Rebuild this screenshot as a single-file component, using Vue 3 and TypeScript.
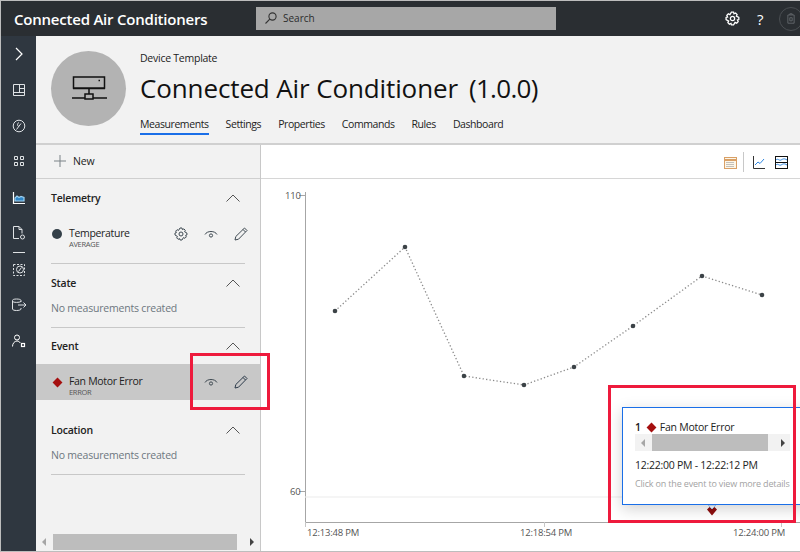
<script setup lang="ts">
const tabs = ['Measurements', 'Settings', 'Properties', 'Commands', 'Rules', 'Dashboard']

const points = [
  [335, 311], [405, 247], [464, 376], [524, 385],
  [574, 367], [633, 326], [702, 276], [762, 295]
]
const polyline = points.map(p => `${p[0] - 261},${p[1] - 144}`).join(' ')
</script>

<template>
  <div class="window">
    <header class="topbar">
      <div class="brand">Connected Air Conditioners</div>
      <div class="search">
        <svg width="14" height="14" viewBox="0 0 14 14" fill="none" stroke="#333" stroke-width="1.1">
          <circle cx="8.5" cy="5.5" r="3.6" />
          <path d="M5.8 8.2 1.5 12.5" />
        </svg>
        <span>Search</span>
      </div>
      <div class="top-icons">
        <svg width="15" height="15" viewBox="0 0 14 14" fill="none" stroke="#fff" stroke-width="1.2">
          <circle cx="7" cy="7" r="2" />
          <path d="M6 1h2l.4 1.6 1.5-.7 1.4 1.4-.7 1.5L12.9 6v2l-1.300.4.7 1.500-1.400 1.400-1.500-.7L8 13H6l-.4-1.400-1.500.7-1.400-1.400.7-1.500L1 8V6l1.400-.4-.7-1.500 1.400-1.400 1.500.7z" />
        </svg>
        <span class="help">?</span>
        <div class="avatar">
          <svg width="8" height="11" viewBox="0 0 10 14" fill="none" stroke="#6d7175">
            <path d="M1 2.500h8V13H1zM3.500 2.500V1h3v1.500M3.500 6h3v4h-3z" />
          </svg>
        </div>
      </div>
    </header>

    <div class="body">
      <nav class="rail">
        <svg width="10" height="14" viewBox="0 0 10 14" fill="none" stroke="#fff" stroke-width="1.200">
          <path d="M2 1l6 6-6 6" />
        </svg>
        <svg width="14" height="14" viewBox="0 0 14 14" fill="none" stroke="#dfe2e5">
          <path d="M1.500 1.500h11v11h-11zM1.500 9.500h11M7.500 1.500v8M7.500 5.500h5" />
        </svg>
        <svg width="14" height="14" viewBox="0 0 14 14" fill="none" stroke="#dfe2e5">
          <circle cx="7" cy="7" r="5.800" />
          <path d="M4.500 10.500 9 4.500M7 7.500c-2-.5-2-3.500 0-3.800" />
        </svg>
        <svg width="12" height="12" viewBox="0 0 12 12" fill="none" stroke="#dfe2e5">
          <path d="M1.500 1.500h3v3h-3zM7.500 1.500h3v3h-3zM1.500 7.500h3v3h-3zM7.500 7.500h3v3h-3z" />
        </svg>
        <svg class="r-telemetry" width="14" height="14" viewBox="0 0 14 14" fill="none" stroke="#9fd2f2" stroke-width="1.200">
          <path d="M1.500 1v11.500h11.500" stroke="#fff" />
          <path d="M3 10V7l2-2 2 1.500 2-1 3 1V10z" fill="#2f86c8" />
        </svg>
        <svg class="r-doc" width="14" height="16" viewBox="0 0 14 16" fill="none" stroke="#dfe2e5">
          <path d="M7 13.500H1.500v-12H7l3 3v4M7 1.500v3h3" />
          <circle cx="10.500" cy="12" r="2" />
        </svg>
        <div class="rail-sep"></div>
        <svg width="14" height="14" viewBox="0 0 14 14" fill="none" stroke="#dfe2e5">
          <path d="M1.500 1.500h11v11h-11z" stroke-dasharray="2 1.500" />
          <circle cx="8" cy="6.500" r="3.500" />
          <path d="M6.500 8.500 9.500 4.500" />
        </svg>
        <svg width="16" height="14" viewBox="0 0 16 14" fill="none" stroke="#dfe2e5">
          <path d="M10 4V2.500C10 1.500 8 1 5.500 1S1.500 1.500 1.500 2.500v8.500c0 1 2 1.500 4 1.500s4.500-.5 4.500-1.500V10M1.500 3.500c1 1.200 7 1.200 8.500 0M7 7h8M12.500 4.500 15 7l-2.500 2.500" />
        </svg>
        <svg width="14" height="14" viewBox="0 0 14 14" fill="none" stroke="#fff">
          <circle cx="5" cy="3.500" r="2.500" />
          <path d="M.5 12.500c0-3 2-5.500 4.500-5.500 1.500 0 2.500.8 3.300 2" />
          <rect x="9.500" y="9.500" width="3" height="3" stroke="#fff" stroke-width="1.200" />
        </svg>
      </nav>

      <main class="main">
        <section class="page-head">
          <div class="device-circle">
            <svg width="36" height="26" viewBox="0 0 36 26" fill="none" stroke="#111" stroke-width="1.500">
              <path d="M2.500 1h31v11h-31zM2 12.500h32" />
              <path d="M27.500 4.500h1.500" stroke-width="1.600" />
              <path d="M18 13v5M14 19.500V18h8v5h-8zM1 22h13M22 22h14" />
            </svg>
          </div>
          <div class="head-text">
            <div class="eyebrow">Device Template</div>
            <h1>Connected Air Conditioner<span class="ver">(1.0.0)</span></h1>
            <div class="tabs">
              <span v-for="(t, i) in tabs" :key="t" class="tab" :class="{ active: i === 0 }">{{ t }}</span>
            </div>
          </div>
        </section>

        <div class="content">
          <aside class="panel">
            <div class="new-row">
              <svg width="14" height="14" viewBox="0 0 14 14" stroke="#7a8287" fill="none"><path d="M7 1v12M1 7h12" /></svg>
              <span>New</span>
            </div>

            <div class="group">
              <div class="group-head">
                <b>Telemetry</b>
                <svg class="caret" width="14" height="8" viewBox="0 0 14 8" fill="none" stroke="#555"><path d="M.5 7.500 7 1l6.500 6.500" /></svg>
              </div>
              <div class="item">
                <span class="dot"></span>
                <div class="item-name">
                  <div>Temperature</div>
                  <small>AVERAGE</small>
                </div>
                <svg class="gear" width="14" height="14" viewBox="0 0 14 14" fill="none" stroke="#3f4a52">
                  <circle cx="7" cy="7" r="2" />
                  <path d="M6 1h2l.4 1.600 1.500-.7 1.400 1.400-.7 1.500L12.900 6v2l-1.300.4.7 1.500-1.400 1.400-1.500-.7L8 13H6l-.4-1.400-1.500.7-1.400-1.400.7-1.500L1 8V6l1.400-.4-.7-1.500 1.400-1.400 1.500.7z" />
                </svg>
                <svg class="eye" width="14" height="10" viewBox="0 0 14 10" fill="none" stroke="#3f4a52">
                  <path d="M1 5.500C3 1.500 11 1.500 13 5.500" />
                  <circle cx="7" cy="6.500" r="1.600" />
                </svg>
                <svg class="pen" width="14" height="14" viewBox="0 0 14 14" fill="none" stroke="#3f4a52">
                  <path d="M1 13l.8-3.500L10.500 1 13 3.500 4.500 12.200zM9 2.500 11.500 5" />
                </svg>
              </div>
            </div>

            <div class="group">
              <div class="group-head">
                <b>State</b>
                <svg class="caret" width="14" height="8" viewBox="0 0 14 8" fill="none" stroke="#555"><path d="M.5 7.500 7 1l6.500 6.500" /></svg>
              </div>
              <div class="empty">No measurements created</div>
            </div>

            <div class="group event">
              <div class="group-head tight">
                <b>Event</b>
                <svg class="caret" width="14" height="8" viewBox="0 0 14 8" fill="none" stroke="#555"><path d="M.5 7.500 7 1l6.500 6.500" /></svg>
              </div>
              <div class="item selected">
                <span class="diamond"></span>
                <div class="item-name">
                  <div>Fan Motor Error</div>
                  <small>ERROR</small>
                </div>
                <svg class="eye" width="14" height="10" viewBox="0 0 14 10" fill="none" stroke="#3f4a52">
                  <path d="M1 5.500C3 1.500 11 1.500 13 5.500" />
                  <circle cx="7" cy="6.500" r="1.600" />
                </svg>
                <svg class="pen" width="14" height="14" viewBox="0 0 14 14" fill="none" stroke="#2c3a4a">
                  <path d="M1 13l.8-3.500L10.500 1 13 3.500 4.500 12.200zM9 2.500 11.500 5" />
                </svg>
              </div>
            </div>

            <div class="group">
              <div class="group-head location">
                <b>Location</b>
                <svg class="caret" width="14" height="8" viewBox="0 0 14 8" fill="none" stroke="#555"><path d="M.5 7.500 7 1l6.500 6.500" /></svg>
              </div>
              <div class="empty">No measurements created</div>
            </div>

            <div class="spacer"></div>
            <div class="hscroll panel-scroll">
              <i class="arrow left"></i>
              <div class="thumb"></div>
              <i class="arrow right"></i>
            </div>
          </aside>

          <section class="chart-pane">
            <div class="chart-tools">
              <svg width="13" height="13" viewBox="0 0 13 13" fill="none">
                <rect x=".5" y="1.500" width="12" height="11" fill="#fdf6e8" stroke="#d9a066" />
                <path d="M.5 4h12" stroke="#d9a066" stroke-width="2" />
                <path d="M2.500 6.500h8M2.500 8.500h8M2.500 10.500h8" stroke="#8a8a8a" stroke-dasharray="1 1" />
              </svg>
              <div class="tool-sep"></div>
              <svg width="12" height="13" viewBox="0 0 12 13" fill="none">
                <path d="M.5 0v12.500H12" stroke="#333" />
                <path d="M2 9l3-3 2 1.500L11 3" stroke="#2f86e0" />
              </svg>
              <svg class="tool-last" width="13" height="13" viewBox="0 0 13 13" fill="none">
                <rect x=".5" y=".5" width="12" height="12" stroke="#111" />
                <path d="M1 4c2-2 3 1 5 0s3-2 6 0M1 9c2-2 3 1 5 0s3-2 6 0" stroke="#2f86e0" />
                <path d="M1 6.500h11" stroke="#111" />
              </svg>
            </div>

            <div class="canvas">
              <svg class="plot" width="539" height="406" viewBox="0 0 539 406">
                <path d="M44.500 48V378" stroke="#a6a6a6" />
                <path d="M38 51.500h6M38 347.500h6" stroke="#a6a6a6" />
                <path d="M44.500 353H539" stroke="#f5f5f5" stroke-width="2" />
                <path d="M44 378.500H539" stroke="#a6a6a6" />
                <path d="M44.500 378v5M283.500 378v5M520.500 378v5" stroke="#c6c6c6" />
                <polyline :points="polyline" fill="none" stroke="#8a8a8a" stroke-width="1.300" stroke-dasharray="1.300 2.200" />
                <circle v-for="(p, i) in points" :key="i" :cx="p[0] - 261" :cy="p[1] - 144" r="2.300" fill="#3c4347" />
                <text x="24" y="55" class="tick">110</text>
                <text x="29" y="351" class="tick">60</text>
                <text x="46" y="392" class="tick">12:13:48 PM</text>
                <text x="259" y="392" class="tick">12:18:54 PM</text>
                <text x="472" y="392" class="tick">12:24:00 PM</text>
                <path d="M446 365.500l2.500-2.500 2.500 1.500 2.500-1.500 2.500 2.500-5 6z" fill="#8f0f0f" />
                <path d="M447 361l4 4 4-4z" fill="#fff" stroke="#a9cdf5" />
              </svg>

              <div class="tooltip">
                <div class="tip-title"><b>1</b><span class="diamond small"></span><span>Fan Motor Error</span></div>
                <div class="hscroll tip-scroll">
                  <i class="arrow left"></i>
                  <div class="thumb"></div>
                  <i class="arrow right"></i>
                </div>
                <div class="tip-time">12:22:00 PM - 12:22:12 PM</div>
                <div class="tip-hint">Click on the event to view more details</div>
              </div>
            </div>
          </section>
        </div>
      </main>
    </div>

    <div class="callout callout-actions"></div>
    <div class="callout callout-tip"></div>
  </div>
</template>

<style scoped>
.window {
  position: relative;
  width: 800px;
  height: 552px;
  box-sizing: border-box;
  display: flex;
  flex-direction: column;
  overflow: hidden;
  border-top: 1px solid #bdbdbd;
  border-left: 1px solid #bdbdbd;
  border-bottom: 1px solid #bdbdbd;
  font-family: "Open Sans", "Noto Sans", sans-serif;
  color: #222;
  background: #fff;
}
.topbar {
  height: 35px;
  flex: none;
  display: flex;
  align-items: center;
  background: #2a2e32;
}
.brand {
  width: 255px;
  padding-left: 13px;
  box-sizing: border-box;
  color: #fff;
  font-size: 15px;
  font-weight: 600;
  letter-spacing: -0.22px;
  white-space: nowrap;
}
.search {
  width: 300px;
  height: 23px;
  margin-top: -1px;
  background: #a7a7a7;
  display: flex;
  align-items: center;
  gap: 5px;
  padding-left: 8px;
  box-sizing: border-box;
  font-size: 10px;
  color: #2c2c2c;
}
.top-icons {
  margin-left: auto;
  display: flex;
  align-items: center;
}
.help {
  color: #fff;
  font-size: 15px;
  margin-left: 17px;
  width: 9px;
}
.avatar {
  width: 24px;
  height: 24px;
  box-sizing: border-box;
  margin: 0 -3px 0 13px;
  border: 1px solid #4a4e52;
  border-radius: 50%;
  display: flex;
  align-items: center;
  justify-content: center;
}
.body {
  flex: 1;
  min-height: 0;
  display: flex;
}
.rail {
  width: 35px;
  flex: none;
  background: #2f3740;
  display: flex;
  flex-direction: column;
  align-items: center;
  padding-top: 11px;
}
.rail > svg {
  margin-bottom: 22px;
}
.rail > svg:nth-child(4) {
  margin-bottom: 24px;
}
.rail > .r-telemetry {
  margin-bottom: 20px;
}
.rail > .r-doc {
  margin-bottom: 11px;
}
.rail-sep {
  width: 12px;
  height: 1px;
  background: #dfe2e5;
  margin-bottom: 10px;
}
.rail > svg:nth-child(8) {
  margin-bottom: 21px;
}
.main {
  flex: 1;
  min-width: 0;
  display: flex;
  flex-direction: column;
}
.page-head {
  height: 109px;
  flex: none;
  box-sizing: border-box;
  display: flex;
  background: #f2f2f2;
  border-bottom: 2px solid #d0d0d0;
  padding: 15px 0 0 15px;
}
.device-circle {
  width: 75px;
  height: 75px;
  border-radius: 50%;
  background: #b3b3b3;
  display: flex;
  align-items: center;
  justify-content: center;
  flex: none;
}
.head-text {
  margin-left: 14px;
  margin-top: -1px;
}
.eyebrow {
  font-size: 10.5px;
  line-height: 16px;
  letter-spacing: -0.25px;
}
h1 {
  margin: 5px 0 0;
  font-size: 26px;
  line-height: 34px;
  font-weight: 400;
  color: #111;
  letter-spacing: -0.12px;
  white-space: nowrap;
}
.ver {
  margin-left: 11px;
  letter-spacing: -0.7px;
}
.tabs {
  display: flex;
  gap: 17px;
  margin-top: 11px;
}
.tab {
  font-size: 10.5px;
  line-height: 16px;
  padding-bottom: 1px;
  letter-spacing: -0.42px;
  color: #222;
}
.tab.active {
  border-bottom: 2px solid #1a6fe8;
}
.content {
  flex: 1;
  min-height: 0;
  display: flex;
}
.panel {
  width: 225px;
  flex: none;
  box-sizing: border-box;
  background: #f2f2f2;
  border-right: 1px solid #c8c8c8;
  display: flex;
  flex-direction: column;
}
.new-row {
  height: 34px;
  flex: none;
  box-sizing: border-box;
  border-bottom: 1px solid #cfcfcf;
  display: flex;
  align-items: center;
  padding: 0 0 2px 17px;
  gap: 6px;
  font-size: 10.5px;
  letter-spacing: -0.2px;
}
.group {
  flex: none;
  margin: 0 15px;
  border-bottom: 1px solid #c8c8c8;
}
.group.event {
  margin: 0;
  border-bottom: none;
}
.group.event .group-head {
  margin: 0 15px;
}
.group-head {
  display: flex;
  align-items: center;
  justify-content: space-between;
  height: 16px;
  padding: 11px 0 9px;
}
.group-head.tight {
  padding: 10px 0;
}
.group-head.location {
  padding: 10px 0 9px;
}
.group-head b {
  font-size: 10.5px;
  font-weight: 600;
  letter-spacing: -0.2px;
}
.caret {
  margin-right: 5px;
}
.item {
  display: flex;
  align-items: center;
  height: 36px;
  margin-bottom: 12px;
}
.item > svg {
  margin-top: 2px;
}
.item-name {
  font-size: 10.5px;
  line-height: 12px;
  letter-spacing: -0.32px;
  flex: 1;
  margin-top: 10px;
}
.item.selected .item-name {
  margin-top: 8px;
}
.item.selected > svg {
  margin-top: 0;
}
.item-name small {
  display: block;
  font-size: 7.5px;
  line-height: 10px;
  letter-spacing: -0.3px;
  color: #555;
}
.dot {
  width: 10px;
  height: 10px;
  border-radius: 50%;
  background: #333f48;
  margin: 2px 7px 0 1px;
}
.gear {
  margin-right: 16px;
}
.eye {
  margin-right: 16px;
}
.pen {
  margin-right: -3px;
}
.item.selected .pen {
  margin-right: 6px;
}
.empty {
  font-size: 10.5px;
  line-height: 16px;
  letter-spacing: -0.2px;
  color: #6d7780;
  padding-bottom: 11px;
}
.item.selected {
  background: #c8c8c8;
  padding: 0 6px 0 18px;
  box-sizing: border-box;
}
.diamond {
  width: 7px;
  height: 7px;
  background: #a50f0f;
  transform: rotate(45deg);
  margin-right: 8px;
}
.diamond.small {
  margin: 0 5px 0 7px;
}
.spacer {
  flex: 1;
}
.hscroll {
  display: flex;
  align-items: center;
  background: #f2f2f2;
}
.panel-scroll {
  height: 16px;
  flex: none;
  margin-bottom: 1px;
}
.thumb {
  height: 100%;
  background: #bdbdbd;
}
.arrow {
  width: 0;
  height: 0;
  border-top: 4px solid transparent;
  border-bottom: 4px solid transparent;
  flex: none;
}
.arrow.left {
  border-right: 4px solid #a6a6a6;
  margin: 0 7px 0 6px;
}
.arrow.right {
  border-left: 4px solid #444;
  margin: 0 5px 0 13px;
}
.panel-scroll .thumb {
  width: 184px;
}
.chart-pane {
  flex: 1;
  min-width: 0;
  display: flex;
  flex-direction: column;
  background: #fff;
}
.chart-tools {
  height: 34px;
  flex: none;
  box-sizing: border-box;
  border-bottom: 1px solid #d6d6d6;
  display: flex;
  align-items: center;
  justify-content: flex-end;
  padding: 1px 12px 0 0;
}
.tool-sep {
  width: 1px;
  height: 20px;
  background: #c8c8c8;
  margin: 0 9px 0 6px;
}
.tool-last {
  margin-left: 10px;
}
.canvas {
  position: relative;
  flex: 1;
  min-height: 0;
}
.plot {
  position: absolute;
  left: 0;
  top: -35px;
  pointer-events: none;
}
.plot .tick {
  font-size: 9.5px;
  fill: #555;
  letter-spacing: -0.2px;
}
.tooltip {
  position: absolute;
  left: 361px;
  top: 228px;
  width: 190px;
  height: 98px;
  box-sizing: border-box;
  background: #fff;
  border: 1px solid #1a6fe8;
  padding: 13px 12px;
  box-shadow: 0 4px 14px rgba(0, 0, 0, 0.18);
  font-size: 10.5px;
  letter-spacing: -0.25px;
}
.tip-title {
  display: flex;
  align-items: center;
  line-height: 12px;
}
.tip-title b {
  font-weight: 600;
}
.tip-scroll {
  width: 155px;
  height: 17px;
  margin: 1px 0 0 0;
}
.tip-scroll .thumb {
  width: 116px;
}
.tip-time {
  margin-top: 7px;
  line-height: 14px;
}
.tip-hint {
  margin-top: 6px;
  font-size: 9px;
  line-height: 12px;
  color: #a3a3a3;
  white-space: nowrap;
  letter-spacing: -0.17px;
}
.callout {
  position: absolute;
  box-sizing: border-box;
  border: 3px solid #ee1a3c;
}
.callout-actions {
  left: 189px;
  top: 352px;
  width: 80px;
  height: 57px;
}
.callout-tip {
  left: 607px;
  top: 384px;
  width: 188px;
  height: 138px;
}
</style>
